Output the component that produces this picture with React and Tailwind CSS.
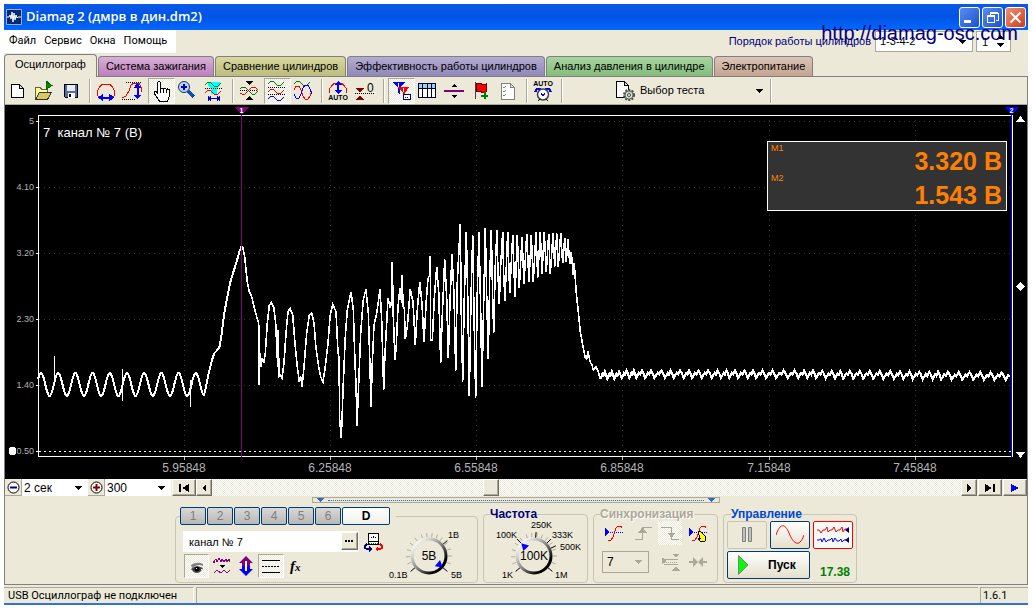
import React, { useState } from "react";

const PRESSED =
  "border border-t-[#aca899] border-l-[#aca899] border-r-white border-b-white bg-[repeating-conic-gradient(#ece9d8_0_25%,#fff_0_50%)] bg-[length:2px_2px]";
const RAISED =
  "border border-t-white border-l-white border-r-[#716f64] border-b-[#716f64] bg-[#ece9d8] shadow-[inset_-1px_-1px_0_#aca899]";

/* ---------- signal ---------- */

// samples are kept in thirds of a chart unit, relative to the block origin
const block = (ox, oy, list) => {
  const out = [];
  for (let i = 0; i < list.length; i += 2) {
    out.push([ox + list[i] / 3, oy + list[i + 1] / 3]);
  }
  return out;
};

const idle = () => {
  const out = [];
  for (let x = 38; x <= 203; x++) {
    out.push([x, 384.5 - 11.5 * Math.cos(((x - 41) * 2 * Math.PI) / 17.2)]);
  }
  return out;
};

const RISE = [
  612, 585, 618, 560, 626, 520, 636, 480, 643, 460, 650, 452, 658, 443, 664, 410, 672, 345, 680, 300,
  690, 250, 698, 222, 710, 185, 718, 155, 725, 138,
];

const BURST = [
  34, 78, 38, 82, 44, 110, 48, 150, 52, 185, 58, 215, 65, 230, 72, 260, 80, 290, 86,
  310, 88, 495, 90, 400, 92, 440, 97, 415, 101, 430, 106, 400, 112, 310, 118, 255, 124, 248, 131, 262,
  137, 310, 143, 440, 145, 330, 147, 470, 152, 465, 156, 475, 162, 430, 168, 340, 174, 275, 180, 265,
  188, 285, 196, 380, 202, 440, 208, 485, 213, 470, 216, 500, 222, 440, 230, 340, 238, 285, 245, 278,
  252, 310, 258, 385, 266, 440, 272, 470, 279, 487, 286, 440, 294, 370, 300, 290, 308, 252, 318, 275,
  324, 400, 327, 410, 329, 600, 334, 655, 340, 490, 346, 350, 352, 270, 363, 215, 370, 270, 375, 430,
  378, 490, 381, 617, 386, 490, 392, 340, 400, 240, 408, 207, 415, 280, 420, 440, 423, 560, 427, 430,
  432, 315, 440, 280, 450, 208, 455, 300, 461, 510, 465, 400, 470, 310, 474, 235, 481, 265, 485, 240,
  487, 125, 490, 290, 495, 420, 499, 375, 504, 260, 510, 203, 515, 250, 517, 165, 519, 260, 523, 265,
  526, 358, 532, 320, 541, 207, 549, 245, 556, 375, 562, 270, 569, 187, 576, 250, 582, 365, 589, 240,
];

const SWEEP = [
  84, 190, 90, 180, 91, 123, 92, 375, 97, 375, 103, 250, 110, 157, 116, 230, 122, 445, 127, 300, 134,
  133, 140, 250, 145, 430, 150, 260, 156, 118, 162, 240, 167, 467, 172, 200, 176, 120, 181, 27, 184,
  300, 188, 500, 193, 250, 199, 50, 203, 240, 208, 543, 213, 250, 218, 60, 222, 300, 227, 548, 232, 230,
  237, 50, 242, 290, 246, 515, 251, 260, 256, 40, 260, 240, 265, 433, 269, 190, 274, 45, 278, 250, 281,
  353, 286, 150, 291, 45, 294, 180, 298, 268, 302, 150, 308, 50, 311, 180, 315, 257, 323, 50, 329, 235,
  338, 60, 345, 245, 352, 60, 358, 220, 366, 65, 372, 208, 380, 57, 387, 200, 394, 60, 400, 200, 408,
  52, 413, 188, 421, 52, 426, 178, 433, 52, 439, 170, 446, 57, 451, 178, 459, 55, 464, 155, 470, 55,
  475, 155, 482, 55, 488, 145, 494, 70, 499, 140, 504, 72, 509, 148, 514, 110, 520, 180, 523, 145, 528,
  225, 535, 290, 541, 350, 548, 390, 556, 430, 560, 432, 564, 408, 570, 440, 576, 450, 580, 465, 588,
  455, 595, 470, 601, 492,
];

const DIPS = [
  121, 142, 163, 185, 208, 229, 255, 283, 315, 341, 371, 396, 425, 455, 483, 508, 534, 563, 588, 618,
  648, 683, 715, 742, 768, 797, 825, 850, 880, 910, 940, 970, 1002, 1030, 1058, 1088, 1118, 1143, 1175,
  1207, 1240, 1272, 1303, 1337, 1362,
];

const tail = () => {
  const out = [];
  DIPS.slice(0, -1).forEach((dip, i) => {
    const x = 560 + dip / 3;
    const w = (DIPS[i + 1] - dip) / 3;
    const y = 372 + (x > 800 ? (x - 800) / 100 : 0) + (x < 620 ? 1 : 0);
    out.push([x, y + 6], [x + w * 0.3, y + 1], [x + w * 0.45, y + 2.5], [x + w * 0.65, y - 1.5], [x + w * 0.82, y + 1.5]);
  });
  return out.filter(([x]) => x <= 1011);
};

const toPoints = (list) => list.map(([x, y]) => `${x.toFixed(1)},${y.toFixed(1)}`).join(" ");

const SLOW = toPoints([...idle(), ...block(0, 200, RISE)]);
const FAST = toPoints([...block(230, 220, BURST), ...block(400, 215, SWEEP)]);
const SETTLED = toPoints(tail());

const VOLTS = [
  ["5", 121],
  ["4.10", 187],
  ["3.20", 253],
  ["2.30", 319],
  ["1.40", 385],
  ["0.50", 451],
];

const SECONDS = [
  ["5.95848", 184],
  ["6.25848", 330],
  ["6.55848", 476],
  ["6.85848", 622],
  ["7.15848", 769],
  ["7.45848", 915],
];

function Scope() {
  return (
    <div className="relative bg-black">
      <svg viewBox="5 105 1022 374" className="block w-full font-['Liberation_Sans',sans-serif]" shapeRendering="crispEdges">
        {VOLTS.map(([label, y]) => (
          <g key={label}>
            {y < 451 && <path d={`M39 ${y + 0.5}H1011`} stroke="#38381a" strokeDasharray="1 4" />}
            <path d={`M36 ${y + 0.5}h3`} stroke="#fff" />
            <text x="34" y={y + 3} fontSize="9" fill="#b4b4b4" textAnchor="end">
              {label}
            </text>
          </g>
        ))}
        {SECONDS.map(([label, x]) => (
          <g key={label}>
            <path d={`M${x + 0.5} 120V456`} stroke="#38381a" strokeDasharray="1 4" />
            <path d={`M${x + 0.5} 457v3`} stroke="#c0c0c0" />
            <text x={x} y="472" fontSize="12" fill="#b4b4b4" textAnchor="middle">
              {label}
            </text>
          </g>
        ))}
        <path d="M39 451.5H1011" stroke="#fff" strokeDasharray="2 3" />
        <g fill="none" stroke="#fff">
          <polyline points={SLOW} strokeWidth="2" />
          <path d="M54.500 356v26M122.500 369v32M190.500 380v27" />
          <polyline points={FAST} strokeWidth="1.6" />
          <polyline points={SETTLED} strokeWidth="2.2" />
        </g>
        <path d="M38.5 456V115.5H1012.5V456.5H38" fill="none" stroke="#fff" />
        <path d="M241.5 115V457" stroke="#800080" />
        <path d="M1011.5 114V457" stroke="#0000ff" />
        <path d="M234 107h15l-7 8z" fill="#800080" />
        <path d="M1004 107h15l-7 8z" fill="#0000ff" />
        <text x="241.5" y="113" fontSize="7" fontWeight="bold" fill="#fff" textAnchor="middle">
          1
        </text>
        <text x="1011.5" y="113" fontSize="7" fontWeight="bold" fill="#fff" textAnchor="middle">
          2
        </text>
        <path d="M1020.500 116l4.500 6h-9zM1020.500 458l4.500-6h-9zM1020.500 282l4.500 4.500l-4.500 4.500l-4.500-4.500z" fill="#fff" />
        <circle cx="12.500" cy="451" r="4" fill="#fff" />
        <text x="43" y="137" fontSize="13" fill="#fff" xmlSpace="preserve">
          {"7  канал № 7 (В)"}
        </text>
      </svg>
      <div className="absolute top-9 right-5 flex h-[70px] w-60 justify-between border border-white bg-[#333] pr-1 pl-[3px] font-['Liberation_Sans',sans-serif] text-[#ff8000]">
        <div className="flex flex-col text-[9px] leading-3">
          <span className="h-[30px]">M1</span>
          <span>M2</span>
        </div>
        <div className="flex flex-col pt-[2px] text-[25px] leading-[34px] font-bold">
          <span>3.320 В</span>
          <span>1.543 В</span>
        </div>
      </div>
    </div>
  );
}

/* ---------- toolbar icons, 22x22 ---------- */

const Wave = ({ y, x = 2, ...rest }) => (
  <path d={`M${x} ${y + 1}l2-2 2-1 2 1 3 3 2 1 2-1 3-3`} fill="none" {...rest} />
);

const Dots = ({ y, x1 = 2, x2 = 20 }) => <path d={`M${x1} ${y}H${x2}`} stroke="#000" strokeDasharray="1 1" />;

const AutoText = ({ y }) => (
  <text x="11" y={y} fontSize="7" fontWeight="bold" textAnchor="middle" fontFamily="Liberation Sans">
    AUTO
  </text>
);

const ICONS = {
  "new": <path d="M5.500 4.500h8l4 4v9h-12zM13.500 4.500v4h4" fill="#fff" stroke="#000" />,
  open: (
    <>
      <path d="M2.500 19.500v-12h5l1 2h6v3" fill="#ffff99" stroke="#666633" />
      <path d="M2.500 19.500l4-7h12l-4 7z" fill="#d8c860" stroke="#333" />
      <path d="M13 1v9M13 1l6 4.500l-6 4" fill="#009000" stroke="#006000" />
    </>
  ),
  save: (
    <>
      <path d="M4.500 4.500h13v13h-12l-1-1z" fill="#5a6aa8" stroke="#000" />
      <path d="M7 5h8v6H7z" fill="#e8eef8" />
      <path d="M8 13h7v5H8z" fill="#fff" />
      <path d="M9 14h2v3H9z" fill="#000" />
    </>
  ),
  spanX: (
    <>
      <path d="M3.500 17l-1-2v-4l2-4 3-3h7l3 3 2 4v4l-1 2" fill="none" stroke="#f00" />
      <path d="M5 17.500h12" stroke="#00f" strokeWidth="2" />
      <path d="M3 17.500l5-4v8zM19 17.500l-5-4v8z" fill="#00f" />
    </>
  ),
  spanY: (
    <>
      <Dots y={2.5} x1={4} />
      <Dots y={19.5} x1={0} x2={14} />
      <path d="M0 18l4-2 3-5 2-6 3-2h5l2 4v5" fill="none" stroke="#f00" />
      <path d="M15.500 6v11" stroke="#00f" strokeWidth="2" />
      <path d="M15.500 3l4 5h-8zM15.500 19.500l4-5h-8z" fill="#00f" />
    </>
  ),
  hand: (
    <path
      d="M7.500 13V2.500l1-1h1l1 1V9l1-1h1l1 1 1-1h1l1 1.500 1-.5 2 1v6l-2 5h-8l-3-4-2.500-4v-2h2zM10.500 9v4M13.500 9v4M16.500 10v3"
      fill="#fff"
      stroke="#000"
    />
  ),
  zoom: (
    <>
      <circle cx="8" cy="7" r="5.500" fill="#b8d4f0" stroke="#203060" shapeRendering="auto" />
      <path d="M5 7h6M8 4v6" stroke="#0000c0" strokeWidth="2" />
      <path d="M12 11l6 6" stroke="#1050b0" strokeWidth="3" />
    </>
  ),
  range: (
    <>
      <path d="M5 2h12v3l-3 4v5H8V9L5 5z" fill="#00ffff" />
      <Wave y={4} stroke="#008000" />
      <Dots y={8.5} />
      <Wave y={12} stroke="#f00" />
      <path d="M5.500 16v5M16.500 16v5M6 18.500h10M8 16.500l-2 2 2 2M14 16.500l2 2-2 2" fill="none" stroke="#0000c0" />
    </>
  ),
  merge: (
    <>
      <path d="M8 1h7l-3.500 4zM8 20h7l-3.500-4z" />
      <Dots y={10.5} />
      <path d="M2 9l2-2h3l7 7h3l3-3" fill="none" stroke="#008000" />
      <path d="M2 13l2 1h3l7-7h3l3 3" fill="none" stroke="#f00" />
    </>
  ),
  stacked: (
    <>
      <Wave y={3} stroke="#008000" />
      <Dots y={7.5} />
      <Wave y={11} stroke="#f00" />
      <Dots y={14.5} />
      <Wave y={18} stroke="#00f" />
    </>
  ),
  overlay: (
    <>
      <Wave y={3} stroke="#008000" />
      <path d="M2 10l2-4h3l2 4 2 6 2 3h3l2-3 2-5" fill="none" stroke="#f00" />
      <path d="M2 14l2 4h3l2-4 2-6 2-3h3l2 4 2 5" fill="none" stroke="#00f" />
    </>
  ),
  autoSpan: (
    <>
      <path d="M2.500 13V9l2-3 3-3h7l3 3 2 3v4" fill="none" stroke="#f00" />
      <path d="M11 4v8" stroke="#00f" strokeWidth="2" />
      <path d="M11 1l4 4H7zM11 14l4-4H7z" fill="#00f" />
      <AutoText y={20} />
    </>
  ),
  zero: (
    <>
      <path d="M2 8h8l-4 5zM2 20h8l-4-5z" fill="#800000" />
      <Dots y={13.5} x1={1} />
      <text x="13" y="12" fontSize="12" fontFamily="Liberation Sans">
        0
      </text>
    </>
  ),
  markers: (
    <>
      <path d="M2 2h13l-5 6v7l-2-2V8z" fill="#00f" />
      <path d="M8 7h11l-4 6v6l-2-2v-4z" fill="#f00" />
      <path d="M8.500 3v4M13.500 8v4" stroke="#fff" />
      <path d="M13.500 14.500h7v5h-7z" fill="#fff" stroke="#000080" />
      <path d="M15 17.500h4" stroke="#000080" strokeDasharray="1 1" />
    </>
  ),
  table: (
    <>
      <path d="M2.500 3.500h17v14h-17z" fill="#fff" stroke="#000040" />
      <path d="M3 4h16v4H3z" fill="#99ccff" />
      <path d="M2 8.500h17M6.500 4v13M11 4v13M15.500 4v13" stroke="#000" />
    </>
  ),
  split: (
    <>
      <path d="M1 11h20" stroke="#800080" strokeWidth="2" />
      <path d="M8 7h6l-3-3zM8 15h6l-3 3z" />
    </>
  ),
  flag: (
    <>
      <path d="M5.500 2v17" stroke="#404040" />
      <path d="M6 4l4-1 3 2 3-1v8l-3 1-3-2-4 1z" fill="#f00" stroke="#600" />
      <path d="M11 15.500h7M14.500 12v7" stroke="#008000" strokeWidth="2" />
    </>
  ),
  checklist: (
    <>
      <path d="M4.500 3.500h9l4 4v12h-13zM13.500 3.500v4h4" fill="#fff" stroke="#808080" />
      <path d="M6 7l1 1 2-2M6 11l1 1 2-2M6 15l1 1 2-2" fill="none" stroke="#808080" />
    </>
  ),
  autoClock: (
    <>
      <AutoText y={6} />
      <path d="M3 12l2-3h4M19 12l-2-3h-4" fill="none" stroke="#00f" strokeWidth="2" />
      <circle cx="11" cy="14.500" r="5.500" fill="#fff" stroke="#404040" strokeWidth="1.500" shapeRendering="auto" />
      <path d="M9 13l2 3 2-3" fill="none" stroke="#00f" />
      <path d="M6 21l2-2M16 21l-2-2" stroke="#000" />
    </>
  ),
};

const TOOL_GROUPS = [
  [["new", "Новый"], ["open", "Открыть"], ["save", "Сохранить"]],
  [["spanX", "Ширина"], ["spanY", "Высота"], ["hand", "Рука", true], ["zoom", "Лупа"], ["range", "Диапазон"]],
  [["merge", "Совместить"], ["stacked", "Раздельно", true], ["overlay", "Наложение"]],
  [["autoSpan", "Авто"], ["zero", "Ноль"]],
  [["markers", "Маркеры", true], ["table", "Таблица"], ["split", "Разделить"], ["flag", "Метка"], ["checklist", "Список"]],
  [["autoClock", "Автозапуск"]],
];

const Separator = () => <span className="flex h-6 w-2 justify-center"><span className="w-[2px] border-r border-white bg-[#aca899]" /></span>;

const Arrow = ({ className }) => (
  <svg viewBox="0 0 7 4" className={`h-1 w-[7px] ${className}`} fill="currentColor" shapeRendering="crispEdges">
    <path d="M0 0h7L3.500 4z" />
  </svg>
);

function Toolbar() {
  return (
    <div className="flex h-[29px] items-center border-t border-b border-t-[#808080] border-b-[#aca899]">
      {TOOL_GROUPS.map((group, i) => (
        <React.Fragment key={i}>
          {group.map(([icon, title, pressed]) => (
            <button
              key={icon}
              aria-label={title}
              className={`flex h-[26px] w-[27px] items-center pl-px ${pressed ? PRESSED : ""}`}
            >
              <svg viewBox="0 0 22 22" className="h-[22px] w-[22px]" shapeRendering="crispEdges">
                {ICONS[icon]}
              </svg>
            </button>
          ))}
          <Separator />
        </React.Fragment>
      ))}
      <button className="ml-12 flex items-center text-[11px]">
        <svg viewBox="0 0 22 22" className="mr-1 h-[22px] w-[22px]">
          <path d="M2.500 1.500h8l4 4v12h-12zM10.500 1.500v4h4" fill="#fff" stroke="#000" shapeRendering="crispEdges" />
          <circle cx="15" cy="15" r="5" fill="#c8ccc0" stroke="#405048" strokeWidth="2" strokeDasharray="2 1.200" />
          <circle cx="15" cy="15" r="4" fill="#d8dcd0" stroke="#606860" />
          <circle cx="15" cy="15" r="1.500" fill="#fff" stroke="#404840" />
        </svg>
        <span>Выбор теста</span>
        <Arrow className="mr-1 ml-[52px]" />
      </button>
      <Separator />
    </div>
  );
}

/* ---------- header ---------- */

const TABS = [
  ["Осциллограф", ""],
  ["Система зажигания", "bg-linear-to-b from-[#d8b0d8] to-[#bc80bc]"],
  ["Сравнение цилиндров", "bg-linear-to-b from-[#d8d8a0] to-[#bcbc7c]"],
  ["Эффективность работы цилиндров", "bg-linear-to-b from-[#b4acd0] to-[#9088b8]"],
  ["Анализ давления в цилиндре", "bg-linear-to-b from-[#a8d4a0] to-[#84bc7c]"],
  ["Электропитание", "bg-linear-to-b from-[#dcc4b8] to-[#c4a490]"],
];

function TitleBar() {
  const box = "grid h-[21px] w-[21px] place-items-center rounded-[3px] border border-white text-white";
  return (
    <header className="flex h-[26px] items-center bg-linear-to-b from-[#0a5ae8] via-[#0054e3] to-[#0468ff] pr-[2px] pl-[2px]">
      <svg viewBox="0 0 16 16" className="mr-1 h-4 w-4">
        <path d="M.5.5h15v15H.5z" fill="#0a2a70" stroke="#8ab0f0" />
        <path d="M1 8h2l1-2 1 4 1-7 1 10 1-9 1 7 1-5 1 3 1-1h3" fill="none" stroke="#fff" />
      </svg>
      <h1 className="grow font-['Open_Sans','Noto_Sans',sans-serif] text-[13px] font-semibold text-white">Diamag 2 (дмрв в дин.dm2)</h1>
      <div className="flex gap-[2px]">
        <button aria-label="Свернуть" className={`${box} bg-linear-to-br from-[#5a8cf0] to-[#1c50d0]`}>
          <svg viewBox="0 0 15 15" className="h-[15px] w-[15px]"><path d="M2 10h7v3H2z" fill="#fff" /></svg>
        </button>
        <button aria-label="Восстановить" className={`${box} bg-linear-to-br from-[#5a8cf0] to-[#1c50d0]`}>
          <svg viewBox="0 0 15 15" className="h-[15px] w-[15px]" fill="none" stroke="#fff" shapeRendering="crispEdges">
            <path d="M5 5V3h8v7h-2M5 2.500h8M2.500 6.500h7v6h-7zM2 5.500h8" />
          </svg>
        </button>
        <button aria-label="Закрыть" className={`${box} bg-linear-to-br from-[#f09070] to-[#d03810]`}>
          <svg viewBox="0 0 15 15" className="h-[15px] w-[15px]"><path d="M2.500 2.500l10 10M12.500 2.500l-10 10" stroke="#fff" strokeWidth="2" /></svg>
        </button>
      </div>
    </header>
  );
}

function MenuRow() {
  return (
    <div className="flex h-6 items-start justify-between">
      <nav className="flex h-[23px] items-center gap-2 bg-white pr-[9px] pl-[5px] font-[Roboto,sans-serif] text-[11px]">
        {["Файл", "Сервис", "Окна", "Помощь"].map((item) => (
          <button key={item}>{item}</button>
        ))}
      </nav>
      <div className="flex items-center pt-px pr-[17px] text-[11px]">
        <label htmlFor="order" className="mr-1 text-[#000080]">
          Порядок работы цилиндров
        </label>
        <span className="relative mr-[3px]">
          <select id="order" className="block h-[21px] w-[98px] appearance-none border border-[#aca899] bg-white pl-1">
            <option>1-3-4-2</option>
          </select>
          <Arrow className="pointer-events-none absolute top-[9px] right-[7px]" />
        </span>
        <span className="relative">
          <input aria-label="Цилиндр" defaultValue="1" className="block h-[21px] w-[35px] border border-[#aca899] bg-white pl-[5px]" />
          <Arrow className="pointer-events-none absolute top-1 right-[7px] rotate-180" />
          <Arrow className="pointer-events-none absolute top-3 right-[7px]" />
        </span>
      </div>
    </div>
  );
}

function Tabs() {
  const [active, setActive] = useState(0);
  return (
    <div role="tablist" className="flex h-[22px] items-end gap-px text-[11px]">
      {TABS.map(([name, color], i) => (
        <button
          key={name}
          role="tab"
          aria-selected={i === active}
          onClick={() => setActive(i)}
          className={`rounded-t-[4px] border border-b-0 border-[#808080] whitespace-nowrap ${
            i === active ? "relative -mb-px h-[23px] bg-[#ece9d8] px-[10px] pb-1" : `h-5 px-[7px] ${color}`
          }`}
        >
          {name}
        </button>
      ))}
    </div>
  );
}

/* ---------- scroll row ---------- */

function ScaleSelect({ id, label, value, plus }) {
  return (
    <div className="flex">
      <label htmlFor={id} className="grid w-[17px] place-items-center border-r border-b border-[#aca899]" title={label}>
        <svg viewBox="0 0 13 13" className="h-[13px] w-[13px]">
          <circle cx="6.500" cy="6.500" r="5.500" fill="#fff" stroke="#000" />
          <path d={plus ? "M3 6.500h7M6.500 3v7" : "M3 6.500h7"} stroke={plus ? "#800000" : "#000080"} strokeWidth="2" />
        </svg>
      </label>
      <span className="relative">
        <select id={id} className="block h-[17px] w-[66px] appearance-none bg-white pl-[2px] text-[12px] leading-4">
          <option>{value}</option>
        </select>
        <Arrow className="pointer-events-none absolute top-[7px] right-[6px]" />
      </span>
    </div>
  );
}

function StepButton({ label, d, className, fill = "#000" }) {
  return (
    <button aria-label={label} className={`grid place-items-center ${RAISED} ${className}`}>
      <svg viewBox="0 0 12 8" className="h-2 w-3" fill={fill} shapeRendering="crispEdges">
        <path d={d} />
      </svg>
    </button>
  );
}

function ScrollRow() {
  return (
    <div className="flex h-[17px]">
      <ScaleSelect id="timebase" label="Развертка" value="2 сек" />
      <ScaleSelect id="zoomx" label="Масштаб" value="300" plus />
      <StepButton label="В начало" className="ml-px w-6" d="M1 0h2v8H1zM11 0v8L4 4z" />
      <StepButton label="Назад" className="w-4" d="M8 0v8L4 4z" />
      <div className="flex grow justify-center bg-[repeating-conic-gradient(#ece9d8_0_25%,#fff_0_50%)] bg-[length:2px_2px] pr-[192px]">
        <button aria-label="Прокрутка" className={`w-4 ${RAISED}`} />
      </div>
      <StepButton label="Вперед" className="w-4" d="M4 0v8l4-4z" />
      <StepButton label="В конец" className="mx-px w-6" d="M9 0h2v8H9zM1 0v8l7-4z" />
      <StepButton label="Воспроизвести" className="w-6" fill="#00f" d="M2 0v8l8-4z" />
    </div>
  );
}

/* ---------- bottom panel ---------- */

const BOX = "rounded-[4px] border border-[#c8c5b4]";

function Dial({ value, angle, labels, long, id }) {
  const rad = (a) => ((a - 90) * Math.PI) / 180;
  const tick = (a, r1, r2) =>
    `M${50 + r1 * Math.cos(rad(a))} ${45 + r1 * Math.sin(rad(a))}L${50 + r2 * Math.cos(rad(a))} ${45 + r2 * Math.sin(rad(a))}`;
  const minor = [-110, -92, -74, -56, -38, -20, -6, 8, 22, 36, 54, 72, 90, 110];
  return (
    <svg viewBox="0 0 100 72" className="h-[72px] w-[100px] font-['Liberation_Sans',sans-serif]">
      <defs>
        <linearGradient id={id} x1="0" y1="0" x2="1" y2="1">
          <stop offset="0.1" stopColor="#fff" />
          <stop offset="0.5" stopColor="#888" />
          <stop offset="0.8" stopColor="#000" />
        </linearGradient>
      </defs>
      {minor.map((a) => (
        <path key={a} d={tick(a, 19, 23)} stroke="#b0ad9c" />
      ))}
      {long.map((a) => (
        <path key={a} d={tick(a, 18, 24)} stroke="#000" />
      ))}
      <circle cx="50" cy="45" r="17" fill="#ece9d8" stroke={`url(#${id})`} strokeWidth="3" />
      <path d="M-4 3L0-4l4 7z" fill="#00f" transform={`rotate(${angle} 50 45) translate(50 31)`} />
      <text x="50" y="49" fontSize="12" textAnchor="middle">
        {value}
      </text>
      {labels.map(([text, x, y]) => (
        <text key={text} x={x} y={y} fontSize="9">
          {text}
        </text>
      ))}
    </svg>
  );
}

function ChannelBox() {
  const [channel, setChannel] = useState("D");
  return (
    <fieldset className={`flex w-[303px] pl-1 ${BOX}`}>
      <legend className="flex gap-px bg-[#ece9d8] pr-[6px]">
        {["1", "2", "3", "4", "5", "6"].map((n) => (
          <button
            key={n}
            onClick={() => setChannel(n)}
            className="h-[18px] w-[26px] rounded-[2px] border border-[#003c74] bg-linear-to-b from-[#d8d8d8] to-[#b8b8b8] text-[12px] leading-4 text-[#808080]"
          >
            {n}
          </button>
        ))}
        <button
          aria-pressed={channel === "D"}
          onClick={() => setChannel("D")}
          className="h-[18px] w-12 rounded-[2px] border border-[#003c74] bg-linear-to-b from-white to-[#f0f0ea] text-[12px] leading-4 font-bold"
        >
          D
        </button>
      </legend>
      <div className="flex flex-col pt-[6px] pb-1 pl-[3px]">
        <div className="flex items-center">
          <input aria-label="Имя канала" defaultValue="канал № 7" className="h-[21px] w-[158px] bg-white pl-[6px] text-[11px]" />
          <span className="h-[21px] bg-white pr-px pt-px">
            <button aria-label="Свойства канала" className={`h-[18px] w-[17px] text-[12px] leading-2 font-bold ${RAISED}`}>
              <svg viewBox="0 0 15 16" className="h-4 w-[15px]"><path d="M3 7h2v2H3zM6 7h2v2H6zM9 7h2v2H9z" /></svg>
            </button>
          </span>
          <button aria-label="Датчик" className="ml-1">
            <svg viewBox="0 0 20 20" className="h-5 w-5" shapeRendering="crispEdges">
              <path d="M5.500 1.500h10v11h-10z" fill="#fff" stroke="#000" />
              <path d="M8 5l1 1M10 4v2M13 5l-1 1M6 9.500h9" stroke="#000" />
              <path d="M6 11.500h9" stroke="#008000" strokeDasharray="1 1" />
              <path d="M4 12l-2 2v2l2 1h3" fill="none" stroke="#000080" strokeWidth="1.500" />
              <path d="M6 14l3 3-3 3z" fill="#000080" />
              <path d="M17 12l2 2v2l-2 1h-3" fill="none" stroke="#f00" strokeWidth="1.500" />
              <path d="M15 14l-3 3 3 3z" fill="#f00" />
            </svg>
          </button>
        </div>
        <div className="flex pt-[2px] pl-px">
          <button aria-label="Показать" className={`grid h-6 w-[25px] place-items-center ${PRESSED}`}>
            <svg viewBox="0 0 14 12" className="mt-1 h-3 w-[14px]">
              <path d="M1 3q6-4 12-1v2q-5-3-11 2z" fill="#808080" />
              <path d="M1 7q5-5 12-1-2 5-7 5-3-1-5-4z" fill="#444" />
              <circle cx="7" cy="7" r="2.500" />
              <path d="M6 6h1v1H6zM11 7h1v1h-1z" fill="#fff" />
            </svg>
          </button>
          <button aria-label="Фильтр" className="grid w-[25px] place-items-center">
            <svg viewBox="0 0 18 18" className="h-[18px] w-[18px]" shapeRendering="crispEdges" fill="none" stroke="#800080">
              <path d="M1 6V4l2-2 1 3 2-4 2 4 1-3 2 3 2-3 1 3 2-3 1 3" strokeWidth="1.200" />
              <path d="M6 8h6l-3 3z" fill="#000" stroke="none" />
              <path d="M1 16l3-3 4 3 3-3 3 3 3-3" />
            </svg>
          </button>
          <button aria-label="Инверсия" className="grid w-6 place-items-center">
            <svg viewBox="0 0 16 20" className="h-5 w-4">
              <path d="M8 0l7 7h-3v3H4V7H1z" fill="#800080" />
              <path d="M8 20l7-7h-3v-3H4v3H1z" fill="#00f" />
              <path d="M8 5v10" stroke="#fff" strokeWidth="2" />
            </svg>
          </button>
          <button aria-label="Уровни" className={`grid h-6 w-[26px] place-items-center ${PRESSED}`}>
            <svg viewBox="0 0 18 16" className="h-4 w-[18px]" stroke="#000" shapeRendering="crispEdges">
              <path d="M0 2.500h18M0 14.500h18" />
              <path d="M0 8.500h18" strokeDasharray="2 1" />
            </svg>
          </button>
          <button className="ml-[6px] font-['Liberation_Serif',serif] text-[15px] leading-5 font-bold italic">
            f<sub className="bottom-0 text-[11px]">x</sub>
          </button>
        </div>
      </div>
      <div className="-mt-[14px] -mr-2 -mb-2 -ml-1">
        <Dial
          id="ring-gain"
          value="5В"
          angle={130}
          long={[-130, 50, 130]}
          labels={[
            ["1В", 69, 27],
            ["0.1В", 10, 67],
            ["5В", 72, 67],
          ]}
        />
      </div>
    </fieldset>
  );
}

const TriggerWave = ({ cursor }) => (
  <svg viewBox="0 0 18 18" className="h-[18px] w-[18px]" shapeRendering="crispEdges">
    <path d="M0 4l5 4-5 4z" fill="#00f" />
    <path d="M5 8.500h13" stroke="#00f" strokeDasharray="1 1" />
    <path d="M3 16h3l2-3 3-9 2-2h3l1 2" fill="none" stroke="#f00" />
    {cursor && <path d="M9 7l2 0 5 5 1 1-1 4h-5l-2-3h2z" fill="#ff0" stroke="#000" />}
  </svg>
);

function SyncBox() {
  return (
    <fieldset className={`w-[125px] pl-2 ${BOX}`}>
      <legend className="-ml-[2px] bg-[#ece9d8] text-[12px] leading-[14px] font-bold text-[#aca899] [text-shadow:1px_1px_0_#fff]">Синхронизация</legend>
      <div className="flex">
        <button aria-label="Уровень" className="grid h-6 w-6 place-items-center"><TriggerWave /></button>
        <button aria-label="Фронт" className="ml-1 grid h-6 w-7 place-items-center">
          <svg viewBox="0 0 18 16" className="h-4 w-[18px]" fill="none" stroke="#aca899" shapeRendering="crispEdges">
            <path d="M0 14.500h7.500v-12H17" strokeWidth="1.500" />
            <path d="M4 7l3.500-4L11 7z" fill="#aca899" />
          </svg>
        </button>
        <button aria-label="Спад" className="grid h-6 w-6 place-items-center bg-[repeating-conic-gradient(#ece9d8_0_25%,#fff_0_50%)] bg-[length:2px_2px]">
          <svg viewBox="0 0 18 16" className="h-4 w-[18px]" fill="none" stroke="#aca899" shapeRendering="crispEdges">
            <path d="M0 2.500h10.500v12H18" strokeWidth="1.500" />
            <path d="M7 8l3.500 4L14 8z" fill="#aca899" />
          </svg>
        </button>
        <button aria-label="Выбор уровня" className="ml-1 grid h-6 w-6 place-items-center"><TriggerWave cursor /></button>
      </div>
      <div className="flex items-center pt-[6px]">
        <span className="relative">
          <select aria-label="Канал синхронизации" className="block h-[22px] w-[47px] appearance-none border border-[#aca899] pl-1 text-[12px]">
            <option>7</option>
          </select>
          <Arrow className="pointer-events-none absolute top-[9px] right-[7px] text-[#aca899]" />
        </span>
        <button aria-label="Удержание" className="ml-[13px]">
          <svg viewBox="0 0 18 18" className="h-[18px] w-[18px]" fill="#aca899" stroke="#aca899" shapeRendering="crispEdges">
            <path d="M0 5l4 3-4 3zM11 1h6l-3 3zM11 17h6l-3-3z" />
            <path d="M2 6.500h14M2 11.500h14" />
            <path d="M4 9h12" strokeDasharray="1 1" />
          </svg>
        </button>
        <button aria-label="Сжать" className="ml-[9px]">
          <svg viewBox="0 0 18 12" className="h-3 w-[18px]" fill="#aca899">
            <path d="M0 5h4V1l5 5-5 5V7H0zM18 5h-4V1L9 6l5 5V7h4z" />
          </svg>
        </button>
      </div>
    </fieldset>
  );
}

const XP = "border border-[#003c74] rounded-[2px] bg-linear-to-b from-white to-[#e4e0cc]";

function ControlBox() {
  return (
    <fieldset className={`w-[134px] pl-[3px] ${BOX}`}>
      <legend className="ml-1 bg-[#ece9d8] text-[12px] leading-[14px] font-bold text-[#0046d5]">Управление</legend>
      <div className="flex gap-[3px]">
        <button aria-label="Пауза" disabled className="grid h-7 w-10 place-items-center rounded-[2px] border border-[#c8c5b4]">
          <svg viewBox="0 0 12 16" className="h-4 w-3"><path d="M1.500.5h3v14h-3zM7.500.5h3v14h-3z" fill="#c0c0c0" stroke="#808080" /></svg>
        </button>
        <button aria-label="Синус" className={`grid h-7 w-10 place-items-center ${XP}`}>
          <svg viewBox="0 0 28 20" className="h-5 w-7"><path d="M0 10C4-2 9-2 13 8S23 24 28 10" fill="none" stroke="#f00" /></svg>
        </button>
        <button aria-label="Запись" className="grid h-7 w-10 place-items-center rounded-[2px] border border-[#f00] bg-[#f8f8f4]">
          <svg viewBox="0 0 34 20" className="h-5 w-[34px]" fill="none">
            <path d="M1 5h2l2 3 2-3h2l2-3 1 5 2-2h2l2-3 2 5 2-2h2l2-3 1 5 2-3h2" stroke="#f00" />
            <path d="M1 15h2l2-1 1 3 2-4 2 4 2-2h2l2-2 1 4 2-4 2 3h2l2-2 1 3 2-2h2" stroke="#00f" />
            <path d="M33 2v6l-4-3zM33 12v6l-4-3z" fill="#000080" />
          </svg>
        </button>
      </div>
      <div className="flex items-end gap-[10px] pt-[2px]">
        <button className={`flex h-7 w-[83px] items-center pl-[10px] text-[12px] font-bold ${XP}`}>
          <svg viewBox="0 0 10 20" className="mr-5 h-5 w-[10px]"><path d="M.5.500v19L10 10z" fill="#0f0" stroke="#808080" /></svg>
          Пуск
        </button>
        <output className="text-[12px] leading-[14px] font-bold text-[#008000]">17.38</output>
      </div>
    </fieldset>
  );
}

export default function App() {
  return (
    <div className="relative bg-white px-1 py-1 font-['Liberation_Sans',sans-serif] text-black">
      <div className="border-b-2 border-[#2f72d8] bg-[#ece9d8]">
        <TitleBar />
        <MenuRow />
        <Tabs />
        <main className="border-x border-b border-[#808080]">
          <Toolbar />
          <Scope />
          <ScrollRow />
          <div className="flex h-[7px] justify-center">
            <div className="mt-px flex h-[6px] w-[408px] items-center gap-1 border border-[#aca899] px-1 text-[#316ac5]">
              <Arrow className="" />
              <span className="grow border-t border-dotted border-[#316ac5]" />
              <Arrow className="" />
            </div>
          </div>
          <div className="flex justify-center gap-[5px] pt-1 pb-px">
            <ChannelBox />
            <fieldset className={`w-[105px] ${BOX}`}>
              <legend className="ml-[6px] bg-[#ece9d8] text-[12px] leading-[14px] font-bold text-[#000080]">Частота</legend>
              <div className="-mt-[10px] -mb-2">
                <Dial
                  id="ring-rate"
                  value="100K"
                  angle={-45}
                  long={[-130, -45, 5, 45, 65, 130]}
                  labels={[
                    ["100K", 12, 27],
                    ["250K", 47, 17],
                    ["333K", 68, 27],
                    ["500K", 76, 39],
                    ["1K", 18, 67],
                    ["1M", 71, 67],
                  ]}
                />
              </div>
            </fieldset>
            <SyncBox />
            <ControlBox />
          </div>
        </main>
        <footer className="flex gap-[2px] pt-[2px] font-[Roboto,sans-serif] text-[11px] leading-[15px]">
          <span className="w-[190px] border-t border-r border-t-[#aca899] border-r-white pl-1">USB Осциллограф не подключен</span>
          <span className="grow border-t border-l border-[#aca899]" />
          <span className="w-12 border-t border-l border-[#aca899] pl-[2px]">1.6.1</span>
        </footer>
      </div>
      <a href="http://diamag-osc.com" className="absolute top-[22px] right-[14px] text-[20px] leading-[22px] text-[#000080]">
        http://diamag-osc.com
      </a>
    </div>
  );
}
